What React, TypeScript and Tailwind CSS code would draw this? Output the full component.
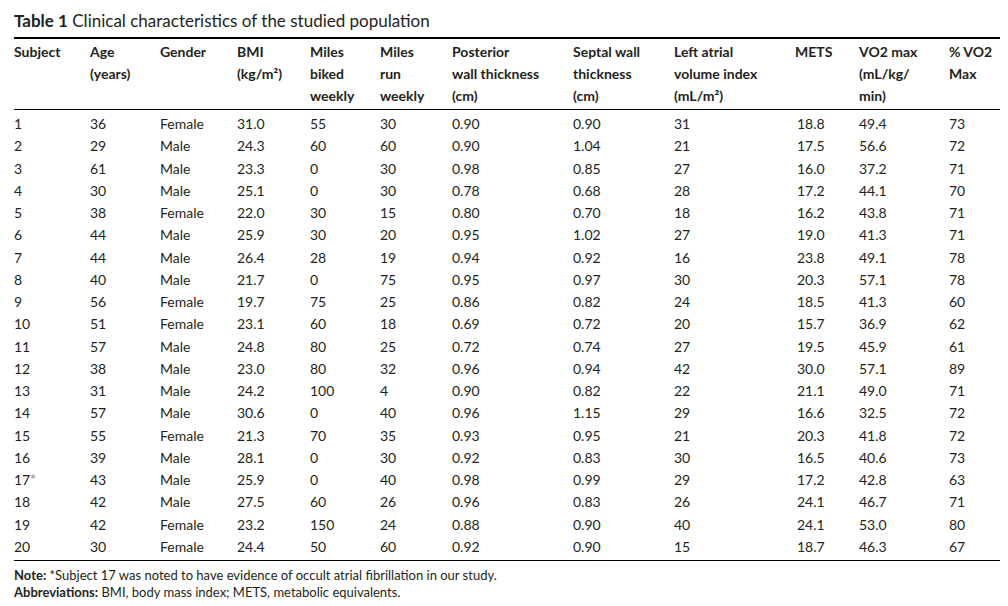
const cols = 'grid grid-cols-[76px_70px_77px_73px_70px_72px_121px_101px_121px_64px_90px_51px]'

type Row = [string, string, string, string, string, string, string, string, string, string, string, string]

const rows: Row[] = [
  ['1', '36', 'Female', '31.0', '55', '30', '0.90', '0.90', '31', '18.8', '49.4', '73'],
  ['2', '29', 'Male', '24.3', '60', '60', '0.90', '1.04', '21', '17.5', '56.6', '72'],
  ['3', '61', 'Male', '23.3', '0', '30', '0.98', '0.85', '27', '16.0', '37.2', '71'],
  ['4', '30', 'Male', '25.1', '0', '30', '0.78', '0.68', '28', '17.2', '44.1', '70'],
  ['5', '38', 'Female', '22.0', '30', '15', '0.80', '0.70', '18', '16.2', '43.8', '71'],
  ['6', '44', 'Male', '25.9', '30', '20', '0.95', '1.02', '27', '19.0', '41.3', '71'],
  ['7', '44', 'Male', '26.4', '28', '19', '0.94', '0.92', '16', '23.8', '49.1', '78'],
  ['8', '40', 'Male', '21.7', '0', '75', '0.95', '0.97', '30', '20.3', '57.1', '78'],
  ['9', '56', 'Female', '19.7', '75', '25', '0.86', '0.82', '24', '18.5', '41.3', '60'],
  ['10', '51', 'Female', '23.1', '60', '18', '0.69', '0.72', '20', '15.7', '36.9', '62'],
  ['11', '57', 'Male', '24.8', '80', '25', '0.72', '0.74', '27', '19.5', '45.9', '61'],
  ['12', '38', 'Male', '23.0', '80', '32', '0.96', '0.94', '42', '30.0', '57.1', '89'],
  ['13', '31', 'Male', '24.2', '100', '4', '0.90', '0.82', '22', '21.1', '49.0', '71'],
  ['14', '57', 'Male', '30.6', '0', '40', '0.96', '1.15', '29', '16.6', '32.5', '72'],
  ['15', '55', 'Female', '21.3', '70', '35', '0.93', '0.95', '21', '20.3', '41.8', '72'],
  ['16', '39', 'Male', '28.1', '0', '30', '0.92', '0.83', '30', '16.5', '40.6', '73'],
  ['17', '43', 'Male', '25.9', '0', '40', '0.98', '0.99', '29', '17.2', '42.8', '63'],
  ['18', '42', 'Male', '27.5', '60', '26', '0.96', '0.83', '26', '24.1', '46.7', '71'],
  ['19', '42', 'Female', '23.2', '150', '24', '0.88', '0.90', '40', '24.1', '53.0', '80'],
  ['20', '30', 'Female', '24.4', '50', '60', '0.92', '0.90', '15', '18.7', '46.3', '67'],
]

const headers = [
  <>Subject</>,
  <>Age<br />(years)</>,
  <>Gender</>,
  <>BMI<br />(kg/m²)</>,
  <>Miles<br />biked<br />weekly</>,
  <>Miles<br />run<br />weekly</>,
  <>Posterior<br />wall thickness<br />(cm)</>,
  <>Septal wall<br />thickness<br />(cm)</>,
  <>Left atrial<br />volume index<br />(mL/m²)</>,
  <>METS</>,
  <>VO2 max<br />(mL/kg/<br />min)</>,
  <>% VO2<br />Max</>,
]

export default function App() {
  return (
    <div className="w-[1008px] h-[606px] bg-white text-[#231f20] font-['Lato',sans-serif] pl-[14px] pt-[11px]">
      <div className="text-[17px] leading-[20px]">
        <span className="font-bold">Table 1</span> Clinical characteristics of the studied population
      </div>
      <div className="w-[986px] mt-[6px] border-t-2 border-black">
        <div className={`${cols} text-[14px] leading-[22px] font-bold pt-[2px] pb-[2px] border-b border-black`}>
          {headers.map((h, i) => (
            <div key={i}>{h}</div>
          ))}
        </div>
        <div className="pt-[3px] pb-[2px] border-b border-black text-[14px] leading-[22.25px]">
          {rows.map((r) => (
            <div key={r[0]} className={`${cols} h-[22.25px]`}>
              {r.map((c, i) => (
                <div key={i} className={i === 9 ? 'pl-[2px]' : ''}>
                  {c}
                  {i === 0 && c === '17' ? (
                    <span className="font-['DejaVu_Sans',sans-serif] text-[#8a8a8a] text-[11px] leading-none relative -top-[3px]">*</span>
                  ) : null}
                </div>
              ))}
            </div>
          ))}
        </div>
      </div>
      <div className="text-[13px] leading-[17px] mt-[6px]">
        <div>
          <span className="font-bold">Note:</span> *Subject 17 was noted to have evidence of occult atrial fibrillation in our study.
        </div>
        <div>
          <span className="font-bold">Abbreviations:</span> BMI, body mass index; METS, metabolic equivalents.
        </div>
      </div>
    </div>
  )
}
